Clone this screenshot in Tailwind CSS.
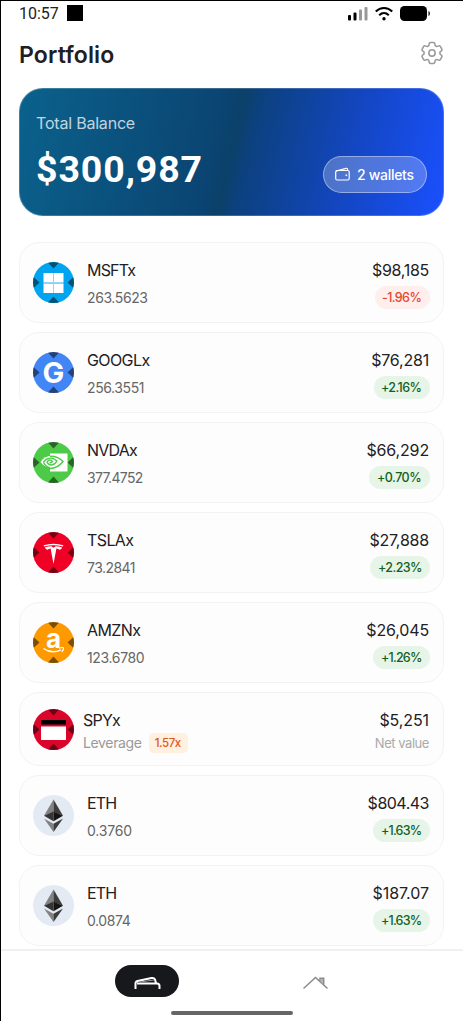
<!DOCTYPE html>
<html lang="en">
<head>
    <meta charset="UTF-8">
    <meta name="viewport" content="width=device-width, initial-scale=1.0">
    <title>Portfolio</title>
    <script src="https://cdn.jsdelivr.net/npm/@tailwindcss/browser@4"></script>
</head>
<body class="bg-white font-['Inter',sans-serif] text-[#1f2023]">
    <!-- Shared icon parts -->
    <svg class="hidden">
        <symbol id="notches" viewBox="0 0 41 41">
            <path d="M14.500 0h12l-6 6.500zM14.500 41h12l-6-6.500zM0 14.500v12l6.500-6zM41 14.500v12l-6.500-6z" fill="#000" fill-opacity=".5"/>
        </symbol>
        <symbol id="eth" viewBox="0 0 41 41">
            <path d="M20.500 4.500 11 20.800l9.500-4z" fill="#828282"/>
            <path d="M20.500 4.500 30 20.800l-9.500-4z" fill="#3c3c3b"/>
            <path d="M11 20.800l9.500-4.300v9.700z" fill="#343434"/>
            <path d="M30 20.800l-9.500-4.300v9.700z" fill="#141414"/>
            <path d="M11 23.600l9.500 5.100V37z" fill="#828282"/>
            <path d="M30 23.600l-9.500 5.100V37z" fill="#3c3c3b"/>
        </symbol>
    </svg>

    <div class="w-[463px] h-[1021px] overflow-hidden flex flex-col border-l border-t border-black">
        <!-- Status bar -->
        <div class="h-[23px] shrink-0 flex items-center pl-[18px] pr-8">
            <span class="font-['Roboto',sans-serif] text-[16px] leading-none w-12 pt-0.5 text-[#222]">10:57</span>
            <span class="size-4 bg-black mt-px"></span>
            <div class="ml-auto flex items-center gap-[7px] mt-px">
                <svg class="w-5 h-[15px]" viewBox="0 0 20 15">
                    <rect x="0" y="9" width="3" height="5.500" rx="1"/>
                    <rect x="5.500" y="6.500" width="3" height="8" rx="1"/>
                    <rect x="11" y="3.500" width="3" height="11" rx="1" fill="#999"/>
                    <rect x="16.500" y="1" width="3" height="13.500" rx="1" fill="#999"/>
                </svg>
                <svg class="w-[18px] h-[15px]" viewBox="0 0 18 15" fill="none" stroke="#000" stroke-width="2.100">
                    <path d="M.8 5.500C5.500.8 12.500.8 17.200 5.500M4.200 9.200c2.900-2.800 6.700-2.800 9.600 0"/>
                    <circle cx="9" cy="12.700" r="1.700" fill="#000" stroke="none"/>
                </svg>
                <svg class="w-[31px] h-[15px]" viewBox="0 0 31 15">
                    <rect x="0" y="0" width="27" height="15" rx="4.500"/>
                    <path d="M28.500 5c1.800.6 1.800 4.400 0 5z"/>
                </svg>
            </div>
        </div>

        <!-- Header -->
        <header class="h-16 shrink-0 flex items-center justify-between pl-[18px] pr-[17px]">
            <h1 class="text-[23px] font-semibold leading-7 tracking-[0.15px] -mt-0.5">Portfolio</h1>
            <svg class="size-7 -mt-[7px]" viewBox="0 0 24 24" fill="none" stroke="#999" stroke-width="1.300" stroke-linecap="round" stroke-linejoin="round">
                <path d="M9.594 3.940c.09-.542.56-.94 1.110-.94h2.593c.55 0 1.020.398 1.110.94l.213 1.281c.063.374.313.686.645.87.074.04.147.083.22.127.325.196.72.257 1.075.124l1.217-.456a1.125 1.125 0 0 1 1.370.49l1.296 2.247a1.125 1.125 0 0 1-.26 1.431l-1.003.827c-.293.241-.438.613-.43.992a7.723 7.723 0 0 1 0 .255c-.008.378.137.75.43.991l1.004.827c.424.35.534.955.26 1.430l-1.298 2.247a1.125 1.125 0 0 1-1.369.491l-1.217-.456c-.355-.133-.75-.072-1.076.124a6.470 6.470 0 0 1-.22.128c-.331.183-.581.495-.644.869l-.213 1.281c-.09.543-.56.94-1.110.94h-2.594c-.55 0-1.019-.398-1.110-.94l-.213-1.281c-.062-.374-.312-.686-.644-.87a6.520 6.520 0 0 1-.22-.127c-.325-.196-.72-.257-1.076-.124l-1.217.456a1.125 1.125 0 0 1-1.369-.49l-1.297-2.247a1.125 1.125 0 0 1 .26-1.431l1.004-.827c.292-.24.437-.613.43-.991a6.932 6.932 0 0 1 0-.255c.007-.38-.138-.751-.43-.992l-1.004-.827a1.125 1.125 0 0 1-.26-1.430l1.297-2.247a1.125 1.125 0 0 1 1.370-.491l1.216.456c.356.133.751.072 1.076-.124.072-.044.146-.086.22-.128.332-.183.582-.495.644-.869l.214-1.280Z"/>
                <circle cx="12" cy="12" r="2.700"/>
            </svg>
        </header>

        <!-- Balance card -->
        <section class="ml-[18px] w-[425px] h-32 shrink-0 rounded-[24px] border border-white/20 bg-origin-border bg-[linear-gradient(103deg,#0a628c_0%,#0b4472_46%,#0b4169_50%,#0c4180_54%,#1346c0_76%,#1a50ff_100%)] flex justify-between px-4">
            <div class="pt-6">
                <p class="text-[16px] leading-5 tracking-[-0.2px] text-white/75">Total Balance</p>
                <p class="mt-[15px] font-['Roboto',sans-serif] text-[37.500px] leading-[42px] font-bold tracking-[0.9px] text-white">$300,987</p>
            </div>
            <div class="self-end mb-[22px] w-[104px] h-[37px] rounded-full border border-white/40 bg-white/25 flex items-center pl-[11px] text-white">
                <svg class="w-[15px] h-[15px] mr-[7px]" viewBox="0 0 15 15" fill="none" stroke="#fff" stroke-width="1.200">
                    <rect x=".7" y="3.500" width="13.500" height="9.500" rx="1.500"/>
                    <path d="M1 4.200 11 1.300q1.700-.3 1.700 2.200"/>
                    <circle cx="11.300" cy="8.200" r=".7" fill="#fff" stroke-width=".4"/>
                </svg>
                <span class="text-[14px] font-medium whitespace-nowrap tracking-[-0.3px]">2 wallets</span>
            </div>
        </section>

        <!-- Holdings -->
        <main class="flex-1 min-h-0 overflow-hidden pt-[26px] pl-[18px] flex flex-col gap-[9px]">
            <article class="w-[425px] h-[81px] shrink-0 rounded-[20px] border border-[#f3f3f3] bg-[#fdfdfd] flex items-center px-[13px]">
                <svg class="size-[41px] mr-[13px] rounded-full bg-[#00a4ef]" viewBox="0 0 41 41">
                    <use href="#notches"/>
                    <path d="M10.500 11h9.500v9h-9.500zM21 11h9.500v9H21zM10.500 21.500h9.500V31h-9.500zM21 21.500h9.500V31H21z" fill="#fff"/>
                    <path d="M10.500 20h20v1.500h-20zM20 11h1v20h-1z" fill="#8fd6f7"/>
                </svg>
                <div class="pt-[3px] flex flex-col gap-2">
                    <p class="text-[16px] leading-5 tracking-[-0.8px]">MSFTx</p>
                    <p class="text-[14px] leading-5 tracking-[-0.4px] text-[#666]">263.5623</p>
                </div>
                <div class="ml-auto pt-1 flex flex-col items-end gap-1.5">
                    <p class="text-[16px] leading-5 pr-px tracking-[-0.3px]">$98,185</p>
                    <span class="h-[23px] w-[55px] rounded-full bg-[#feeeec] text-[#e8452c] text-[12.500px] font-medium leading-6 pl-[7px] tracking-[-0.6px]">-1.96%</span>
                </div>
            </article>

            <article class="w-[425px] h-[81px] shrink-0 rounded-[20px] border border-[#f3f3f3] bg-[#fdfdfd] flex items-center px-[13px]">
                <svg class="size-[41px] mr-[13px] rounded-full bg-[#4285f4]" viewBox="0 0 41 41">
                    <use href="#notches"/>
                    <text x="20.500" y="31" text-anchor="middle" font-size="29" font-weight="700" fill="#fff">G</text>
                </svg>
                <div class="pt-[3px] flex flex-col gap-2">
                    <p class="text-[16px] leading-5 tracking-[-0.6px]">GOOGLx</p>
                    <p class="text-[14px] leading-5 tracking-[-0.4px] text-[#666]">256.3551</p>
                </div>
                <div class="ml-auto pt-1 flex flex-col items-end gap-1.5">
                    <p class="text-[16px] leading-5 pr-px tracking-[-0.2px]">$76,281</p>
                    <span class="h-[23px] w-14 rounded-full bg-[#e6f5e8] text-[#14601c] text-[12.500px] font-medium leading-6 pl-[7px] tracking-[-0.6px]">+2.16%</span>
                </div>
            </article>

            <article class="w-[425px] h-[81px] shrink-0 rounded-[20px] border border-[#f3f3f3] bg-[#fdfdfd] flex items-center px-[13px]">
                <svg class="size-[41px] mr-[13px] rounded-full bg-[#4dcb48]" viewBox="0 0 41 41" fill="none">
                    <use href="#notches"/>
                    <path d="M17 11.500h17.500v18H17z" fill="#fff"/>
                    <path d="M7.500 20c5-7.500 15-8.500 22-1.500-5 8.500-16 10-22 1.500z" fill="#fff"/>
                    <path d="M17 14.200c6-.3 10 2 13 5.300-3.500 4.500-7.500 7-13 7" stroke="#4dcb48" stroke-width="1.500"/>
                    <path d="M10.500 20.200c3-4.700 9-5.700 13.500-1.200-3 5.200-8 5.200-10 1 1.500-2.500 4-2.500 5.500-.6-1 1.500-2 1.500-3 1.200M10.500 20.200c1.500 3.300 4 5 6.500 5.500" stroke="#4dcb48" stroke-width="1.400"/>
                </svg>
                <div class="pt-[3px] flex flex-col gap-2">
                    <p class="text-[16px] leading-5 tracking-[-0.8px]">NVDAx</p>
                    <p class="text-[14px] leading-5 tracking-[-0.65px] text-[#666]">377.4752</p>
                </div>
                <div class="ml-auto pt-1 flex flex-col items-end gap-1.5">
                    <p class="text-[16px] leading-5 pr-px tracking-[-0.15px]">$66,292</p>
                    <span class="h-[23px] w-[61px] rounded-full bg-[#e6f5e8] text-[#14601c] text-[12.500px] font-medium leading-6 pl-2 tracking-[-0.5px]">+0.70%</span>
                </div>
            </article>

            <article class="w-[425px] h-[81px] shrink-0 rounded-[20px] border border-[#f3f3f3] bg-[#fdfdfd] flex items-center px-[13px]">
                <svg class="size-[41px] mr-[13px] rounded-full bg-[#f00024]" viewBox="0 0 41 41">
                    <use href="#notches"/>
                    <path d="M10.500 13.200q10-3 20 0l-.8 1.200q-9.200-2.500-18.400 0z" fill="#fff"/>
                    <path d="M11.800 15.500q3.200-1.200 6.500-1.200l2.200 1.500 2.200-1.500q3.300 0 6.500 1.200-1 2.300-3 2.300-.5-1-2.800-1.200L20.500 32 17.600 16.600q-2.300.2-2.800 1.200-2 0-3-2.300z" fill="#fff"/>
                </svg>
                <div class="pt-[3px] flex flex-col gap-2">
                    <p class="text-[16px] leading-5 tracking-[-0.6px]">TSLAx</p>
                    <p class="text-[14px] leading-5 tracking-[-0.55px] text-[#666]">73.2841</p>
                </div>
                <div class="ml-auto pt-1 flex flex-col items-end gap-1.5">
                    <p class="text-[16px] leading-5 pr-px tracking-[-0.2px]">$27,888</p>
                    <span class="h-[23px] w-[60px] rounded-full bg-[#e6f5e8] text-[#14601c] text-[12.500px] font-medium leading-6 pl-2 tracking-[-0.6px]">+2.23%</span>
                </div>
            </article>

            <article class="w-[425px] h-[81px] shrink-0 rounded-[20px] border border-[#f3f3f3] bg-[#fdfdfd] flex items-center px-[13px]">
                <svg class="size-[41px] mr-[13px] rounded-full bg-[#ff9900]" viewBox="0 0 41 41">
                    <use href="#notches"/>
                    <text x="20.500" y="25.500" text-anchor="middle" font-size="26" font-weight="700" fill="#fff">a</text>
                    <path d="M10.500 26.500q8.500 6 17.500 1.300" fill="none" stroke="#fff" stroke-width="1.500"/>
                    <path d="M26 26.300q4-1.300 4.500-.3.300 1.500-1.700 4" fill="none" stroke="#fff" stroke-width="1.200"/>
                </svg>
                <div class="pt-[3px] flex flex-col gap-2">
                    <p class="text-[16px] leading-5 tracking-[-0.6px]">AMZNx</p>
                    <p class="text-[14px] leading-5 tracking-[-0.35px] text-[#666]">123.6780</p>
                </div>
                <div class="ml-auto pt-1 flex flex-col items-end gap-1.5">
                    <p class="text-[16px] leading-5 pr-px tracking-[-0.15px]">$26,045</p>
                    <span class="h-[23px] w-[57px] rounded-full bg-[#e6f5e8] text-[#14601c] text-[12.500px] font-medium leading-6 pl-2 tracking-[-0.8px]">+1.26%</span>
                </div>
            </article>

            <!-- Leveraged position -->
            <article class="w-[425px] h-[74px] shrink-0 rounded-[20px] border border-[#f3f3f3] bg-[#fdfdfd] flex items-center px-[13px]">
                <svg class="size-[41px] mr-[9px] rounded-full bg-[#d9052b]" viewBox="0 0 41 41">
                    <use href="#notches"/>
                    <path d="M8 11h25v4.500H8z"/>
                    <path d="M8 17.500h25V31H8z" fill="#fff"/>
                </svg>
                <div class="pt-[5px] flex flex-col gap-0.5">
                    <p class="text-[16px] leading-5 tracking-[-0.75px]">SPYx</p>
                    <p class="text-[14px] leading-5 tracking-[-0.35px] text-[#999] flex items-center gap-[7px] h-[22px]">Leverage
                        <span class="h-5 w-[39px] rounded-[5px] bg-[#fff0df] text-[#e2571c] text-[11.500px] font-medium leading-5 pl-1.5 tracking-[-0.4px]">1.57x</span>
                    </p>
                </div>
                <div class="ml-auto pt-[5px] flex flex-col items-end gap-0.5 pr-px">
                    <p class="text-[16px] leading-5 tracking-[-0.1px]">$5,251</p>
                    <p class="text-[13px] leading-[22px] tracking-[-0.45px] text-[#aaa]">Net value</p>
                </div>
            </article>

            <article class="w-[425px] h-[81px] shrink-0 rounded-[20px] border border-[#f3f3f3] bg-[#fdfdfd] flex items-center px-[13px]">
                <svg class="size-[41px] mr-[13px] rounded-full bg-[#e3eaf3]" viewBox="0 0 41 41"><use href="#eth"/></svg>
                <div class="pt-[3px] flex flex-col gap-2">
                    <p class="text-[16px] leading-5 tracking-[-0.8px]">ETH</p>
                    <p class="text-[14px] leading-5 tracking-[-0.2px] text-[#666]">0.3760</p>
                </div>
                <div class="ml-auto pt-1 flex flex-col items-end gap-1.5">
                    <p class="text-[16px] leading-5 pr-px tracking-[-0.5px]">$804.43</p>
                    <span class="h-[23px] w-[57px] rounded-full bg-[#e6f5e8] text-[#14601c] text-[12.500px] font-medium leading-6 pl-2 tracking-[-0.8px]">+1.63%</span>
                </div>
            </article>

            <article class="w-[425px] h-[81px] shrink-0 rounded-[20px] border border-[#f3f3f3] bg-[#fdfdfd] flex items-center px-[13px]">
                <svg class="size-[41px] mr-[13px] rounded-full bg-[#e3eaf3]" viewBox="0 0 41 41"><use href="#eth"/></svg>
                <div class="pt-[3px] flex flex-col gap-2">
                    <p class="text-[16px] leading-5 tracking-[-0.8px]">ETH</p>
                    <p class="text-[14px] leading-5 tracking-[-0.4px] text-[#666]">0.0874</p>
                </div>
                <div class="ml-auto pt-1 flex flex-col items-end gap-1.5">
                    <p class="text-[16px] leading-5 pr-px tracking-[-0.05px]">$187.07</p>
                    <span class="h-[23px] w-[57px] rounded-full bg-[#e6f5e8] text-[#14601c] text-[12.500px] font-medium leading-6 pl-2 tracking-[-0.8px]">+1.63%</span>
                </div>
            </article>
        </main>

        <!-- Bottom navigation -->
        <nav class="h-[72px] shrink-0 border-t-2 border-[#f0f0f0] bg-white flex flex-col items-center justify-between pb-[6px] pt-[14px]">
            <div class="w-full flex items-center pl-[114px]">
                <a class="w-16 h-8 rounded-full bg-[#17181c] flex items-center justify-center pt-0.5">
                    <svg class="w-[27px] h-[15px]" viewBox="0 0 27 15" fill="none" stroke="#fff" stroke-width="2">
                        <path d="M1.500 14V8.500q0-2 2-2.500l14-3q2.500-.5 3.500 1.500l1 3.500M3 8.500h20q2.500 0 2.500 2.500v3"/>
                        <path d="M6 7 20 5" stroke="#999" stroke-width="1"/>
                    </svg>
                </a>
                <a class="ml-[124px] mt-1">
                    <svg class="w-[25px] h-[14px]" viewBox="0 0 25 14" fill="none" stroke="#8b8b8e" stroke-width="1.500">
                        <path d="M.5 12.500 12.500 1.500 24.500 12.500M17 5.500V2.300h3.700V9"/>
                        <path d="M18 3h2v5l-2-2z" fill="#b5b5b7" stroke="none"/>
                    </svg>
                </a>
            </div>
            <div class="w-[122px] h-1 rounded-full bg-[#666] mr-px"></div>
        </nav>
    </div>
</body>
</html>
